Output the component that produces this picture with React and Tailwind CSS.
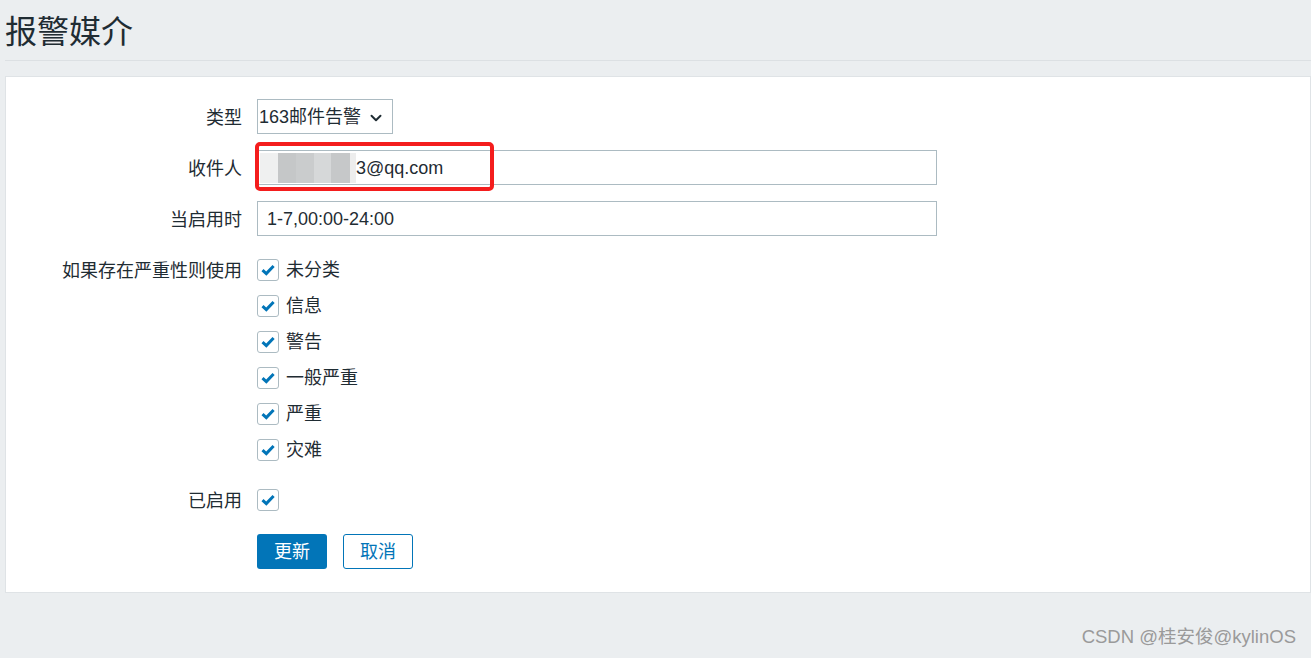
import { ChevronDown } from 'lucide-react';

const font = { fontFamily: '"Liberation Sans", "Noto Sans CJK SC", sans-serif' };

function Check() {
  return (
    <span className="flex h-[22px] w-[22px] items-center justify-center rounded-[3px] border border-[#acbbc2] bg-white">
      <svg width="14" height="12" viewBox="0 0 14 12">
        <path d="M1.5 6.2 L5.3 9.6 L12.6 2" fill="none" stroke="#0275b8" strokeWidth="3" />
      </svg>
    </span>
  );
}

function Row({ label, children, className = '', labelClass = 'h-[35px] leading-[38px]' }) {
  return (
    <div className={`flex ${className}`}>
      <div className={`w-[236px] shrink-0 overflow-hidden text-right text-[18px] text-[#1f2c33] ${labelClass}`}>{label}</div>
      <div className="ml-[15px] flex-1">{children}</div>
    </div>
  );
}

const severities = ['未分类', '信息', '警告', '一般严重', '严重', '灾难'];

export default function App() {
  return (
    <div className="relative h-[658px] w-full overflow-hidden bg-[#ebeef0]" style={font}>
      {/* Header */}
      <div className="ml-[5px] flex h-[61px] items-center border-b border-[#dce0e3] pt-[4px]">
        <h1 className="text-[32px] leading-none text-[#1f2c33]">报警媒介</h1>
      </div>

      {/* Form panel */}
      <div className="ml-[5px] mt-[15px] border border-[#dfe3e6] bg-white pb-[23px] pt-[22px]">
        <Row label="类型">
          <div className="flex h-[35px] w-[136px] items-center justify-between border border-[#acbbc2] pl-[1px] pr-[7px] pt-[2px] text-[18px] text-[#1f2c33]">
            <span>163邮件告警</span>
            <ChevronDown size={18} strokeWidth={2.6} />
          </div>
        </Row>

        <Row label="收件人" className="mt-4">
          <div className="relative">
            <div className="flex h-[35px] w-[680px] items-center border border-[#acbbc2] pl-[2px] text-[18px] text-[#1f2c33]">
              <div className="flex h-[30px]">
                <div className="w-[18px] bg-[#eff0f0]" />
                <div className="w-[18px] bg-[#c5c7c8]" />
                <div className="w-[18px] bg-[#cacccd]" />
                <div className="w-[17px] bg-[#d6d8d9]" />
                <div className="w-[19px] bg-[#c6c8c9]" />
                <div className="w-[6px] bg-[#ededed]" />
              </div>
              <span className="pt-[2px]">3@qq.com</span>
            </div>
            <div className="absolute left-[-2px] top-[-8px] h-[49px] w-[239px] rounded-[5px] border-[4px] border-[#f41d1d]" />
          </div>
        </Row>

        <Row label="当启用时" className="mt-4">
          <div className="flex h-[35px] w-[680px] items-center border border-[#acbbc2] pl-[9px] pt-[2px] text-[18px] text-[#1f2c33]">
            1-7,00:00-24:00
          </div>
        </Row>

        <Row label="如果存在严重性则使用" className="mt-4" labelClass="h-[36px] leading-[38px]">
          <div className="flex flex-col">
            {severities.map((s) => (
              <div key={s} className="flex h-[36px] items-center gap-[7px] text-[18px] text-[#1f2c33]">
                <Check />
                <span className="pt-[1px]">{s}</span>
              </div>
            ))}
          </div>
        </Row>

        <Row label="已启用" className="mt-[14px]" labelClass="h-[36px] leading-[38px]">
          <div className="flex h-[36px] items-center">
            <Check />
          </div>
        </Row>

        <Row label="" className="mt-4">
          <div className="flex gap-[16px]">
            <button className="h-[35px] w-[70px] rounded-[3px] bg-[#0275b8] pt-[1px] text-[18px] text-white">更新</button>
            <button className="h-[35px] w-[70px] rounded-[3px] border border-[#0275b8] bg-white pt-[1px] text-[18px] text-[#0275b8]">取消</button>
          </div>
        </Row>
      </div>

      <div className="absolute bottom-[7px] right-[15px] text-[18.5px] text-[#9a9a9a]">CSDN @桂安俊@kylinOS</div>
    </div>
  );
}
